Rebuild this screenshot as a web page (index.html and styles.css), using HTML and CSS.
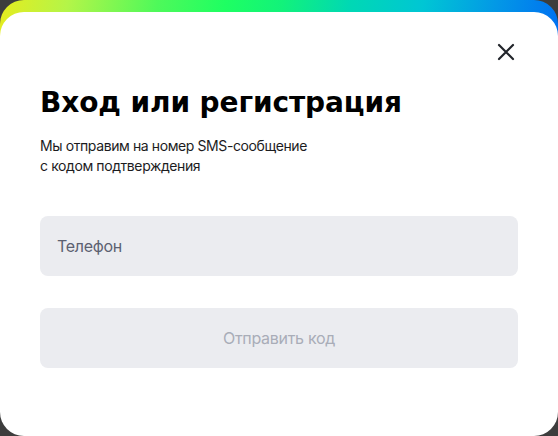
FILE: index.html
```html
<!DOCTYPE html>
<html lang="ru">
<head>
<meta charset="utf-8">
<link rel="stylesheet" href="styles.css">
</head>
<body>
<div class="frame">
  <div class="card">
    <div class="top">
      <button class="close" aria-label="Закрыть">
        <svg width="24" height="24" viewBox="0 0 24 24"><path d="M5 5L19 19M19 5L5 19" stroke="#22252b" stroke-width="2.2" stroke-linecap="round" fill="none"/></svg>
      </button>
    </div>
    <h1 class="title">Вход или регистрация</h1>
    <p class="subtitle">Мы отправим на номер SMS-сообщение<br>с кодом подтверждения</p>
    <div class="field">Телефон</div>
    <div class="submit">Отправить код</div>
  </div>
</div>
</body>
</html>
```
FILE: styles.css
```css
html, body { margin: 0; padding: 0; }
body {
  background: #3d3d3d;
  font-family: Inter, "Noto Sans", sans-serif;
  width: 558px;
  height: 436px;
  overflow: hidden;
}
.frame {
  width: 558px;
  height: 436px;
  box-sizing: border-box;
  padding-top: 12px;
  display: flex;
  flex-direction: column;
  border-radius: 24px 24px 0 0;
  background:
    linear-gradient(100deg, #e6ec1e 0%, #b4f548 12%, #4ef95a 28%, #1eff62 40%, #12f27a 50%, #00d8b4 62%, #00c6d4 75%, #0398e6 88%, #0070f2 100%) top left / 100% 40px no-repeat;
}
.card {
  flex: 1;
  background: #fff;
  border-radius: 24px;
  padding: 28px 40px 0 40px;
  display: flex;
  flex-direction: column;
}
.top {
  display: flex;
  justify-content: flex-end;
  height: 24px;
}
.close {
  width: 24px;
  height: 24px;
  padding: 0;
  border: 0;
  background: none;
  display: flex;
}
.title {
  margin: 22px 0 0 0;
  font-family: "DejaVu Sans", sans-serif;
  font-weight: 700;
  font-size: 28px;
  line-height: 34px;
  color: #000;
  letter-spacing: -0.1px;
}
.subtitle {
  margin: 16px 0 0 0;
  font-size: 14px;
  line-height: 20px;
  color: #1c1c1e;
  letter-spacing: -0.4px;
}
.field {
  margin-top: 40px;
  height: 60px;
  border-radius: 8px;
  background: #ebecf0;
  display: flex;
  align-items: center;
  padding-left: 17px;
  font-size: 16px;
  color: #5c6170;
  letter-spacing: -0.3px;
}
.submit {
  margin-top: 32px;
  height: 60px;
  border-radius: 8px;
  background: #ebecf0;
  display: flex;
  align-items: center;
  justify-content: center;
  font-size: 16px;
  color: #a9adb8;
  letter-spacing: -0.3px;
}
```
